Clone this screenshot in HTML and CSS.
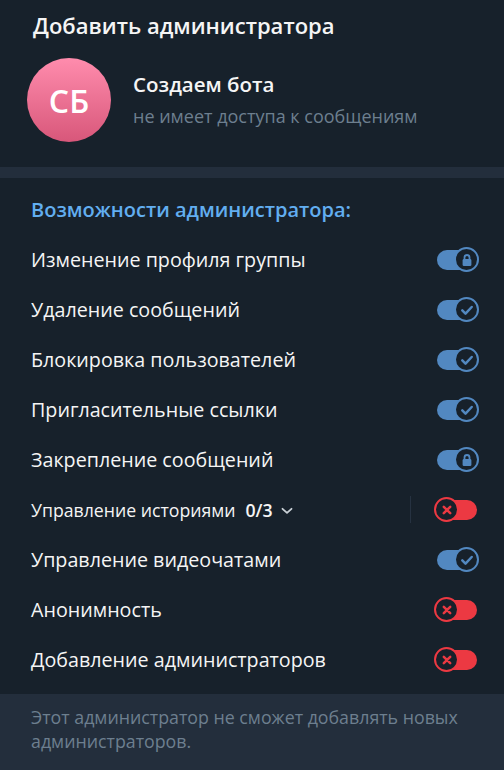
FILE: index.html
```html
<!DOCTYPE html>
<html lang="ru">
<head>
<meta charset="utf-8">
<link rel="stylesheet" href="styles.css">
</head>
<body>
<div class="header">
  <div class="title">Добавить администратора</div>
  <div class="profile">
    <div class="avatar">СБ</div>
    <div class="info">
      <div class="name">Создаем бота</div>
      <div class="status">не имеет доступа к сообщениям</div>
    </div>
  </div>
</div>
<div class="band"></div>
<div class="section">
  <div class="section-title">Возможности администратора:</div>

  <div class="row"><span class="label">Изменение профиля группы</span>
    <span class="toggle on"><span class="track"></span><span class="thumb"><svg viewBox="0 0 20 20"><path class="shackle" d="M7.5 9.6V7.5a2.5 2.5 0 0 1 5 0v2.1"/><rect x="5.6" y="9.1" width="8.8" height="7" rx="1.4"/></svg></span></span></div>

  <div class="row"><span class="label">Удаление сообщений</span>
    <span class="toggle on"><span class="track"></span><span class="thumb"><svg viewBox="0 0 20 20"><path class="stroke" d="M5.3 10.4l3.2 3.2 6.2-6.6"/></svg></span></span></div>

  <div class="row"><span class="label">Блокировка пользователей</span>
    <span class="toggle on"><span class="track"></span><span class="thumb"><svg viewBox="0 0 20 20"><path class="stroke" d="M5.3 10.4l3.2 3.2 6.2-6.6"/></svg></span></span></div>

  <div class="row"><span class="label">Пригласительные ссылки</span>
    <span class="toggle on"><span class="track"></span><span class="thumb"><svg viewBox="0 0 20 20"><path class="stroke" d="M5.3 10.4l3.2 3.2 6.2-6.6"/></svg></span></span></div>

  <div class="row"><span class="label">Закрепление сообщений</span>
    <span class="toggle on"><span class="track"></span><span class="thumb"><svg viewBox="0 0 20 20"><path class="shackle" d="M7.5 9.6V7.5a2.5 2.5 0 0 1 5 0v2.1"/><rect x="5.6" y="9.1" width="8.8" height="7" rx="1.4"/></svg></span></span></div>

  <div class="row"><span class="label small">Управление историями <b class="count">0/3</b><svg class="chev" viewBox="0 0 12 8"><path d="M1.5 1.8l4.5 4 4.5-4"/></svg></span>
    <span class="sep"></span>
    <span class="toggle off"><span class="thumb"><svg viewBox="0 0 20 20"><path class="stroke" d="M6.8 6.8l6.4 6.4M13.2 6.8l-6.4 6.4"/></svg></span><span class="track"></span></span></div>

  <div class="row"><span class="label">Управление видеочатами</span>
    <span class="toggle on"><span class="track"></span><span class="thumb"><svg viewBox="0 0 20 20"><path class="stroke" d="M5.3 10.4l3.2 3.2 6.2-6.6"/></svg></span></span></div>

  <div class="row"><span class="label">Анонимность</span>
    <span class="toggle off"><span class="thumb"><svg viewBox="0 0 20 20"><path class="stroke" d="M6.8 6.8l6.4 6.4M13.2 6.8l-6.4 6.4"/></svg></span><span class="track"></span></span></div>

  <div class="row"><span class="label">Добавление администраторов</span>
    <span class="toggle off"><span class="thumb"><svg viewBox="0 0 20 20"><path class="stroke" d="M6.8 6.8l6.4 6.4M13.2 6.8l-6.4 6.4"/></svg></span><span class="track"></span></span></div>
</div>
<div class="footer">Этот администратор не сможет добавлять новых администраторов.</div>
</body>
</html>
```
FILE: styles.css
```css
* { box-sizing: border-box; }
html, body {
  margin: 0;
  padding: 0;
  background: #17212b;
  height: 100%;
}
body {
  font-family: "Open Sans", "Noto Sans", sans-serif;
  color: #f5f5f5;
  display: flex;
  flex-direction: column;
  overflow: hidden;
}
.header {
  padding: 10px 0 25px 0;
}
.title {
  padding-left: 33px;
  font-size: 22px;
  font-weight: 600;
  line-height: 30px;
}
.profile {
  display: flex;
  align-items: center;
  margin-top: 18px;
  padding-left: 27px;
}
.avatar {
  width: 84px;
  height: 84px;
  border-radius: 50%;
  background: linear-gradient(180deg, #ff8cad 0%, #d8577a 100%);
  display: flex;
  align-items: center;
  justify-content: center;
  font-size: 32px;
  font-weight: 600;
  color: #fff;
  flex-shrink: 0;
}
.info {
  margin-left: 22px;
  display: flex;
  flex-direction: column;
}
.name {
  font-size: 20.5px;
  font-weight: 600;
  line-height: 24px;
}
.status {
  margin-top: 8px;
  font-size: 18px;
  line-height: 24px;
  color: #6d7f8f;
}
.band {
  height: 11px;
  background: #232e3c;
}
.section {
  padding-top: 6px;
  padding-bottom: 10px;
}
.section-title {
  height: 50px;
  display: flex;
  align-items: center;
  padding-left: 31px;
  color: #62aef0;
  font-size: 20px;
  font-weight: 600;
}
.row {
  height: 50px;
  display: flex;
  align-items: center;
  padding: 1px 25px 0 31px;
}
.label {
  flex: 1;
  font-size: 19.7px;
  color: #f5f5f5;
}
.label.small {
  font-size: 17.7px;
  display: flex;
  align-items: center;
}
.count {
  font-weight: 600;
  margin-left: 10px;
}
.chev {
  width: 12px;
  height: 8px;
  margin-left: 8px;
  margin-top: 2px;
}
.chev path {
  fill: none;
  stroke: #c9d0d6;
  stroke-width: 1.8;
  stroke-linecap: round;
  stroke-linejoin: round;
}
.sep {
  width: 1px;
  height: 27px;
  background: #263241;
  margin-right: 23px;
}
.toggle {
  display: flex;
  align-items: center;
}
.track {
  width: 40px;
  height: 20px;
  border-radius: 10px;
}
.thumb {
  width: 25px;
  height: 25px;
  border-radius: 50%;
  border: 2.5px solid;
  background: #17212b;
  position: relative;
  z-index: 1;
  display: flex;
  align-items: center;
  justify-content: center;
}
.thumb svg {
  width: 20px;
  height: 20px;
}
.toggle.on .track { background: #5288c1; }
.toggle.on .thumb { border-color: #5288c1; margin-left: -23px; color: #5288c1; }
.toggle.off { margin-right: 2px; }
.toggle.off .track { background: #ec3942; margin-left: -22px; }
.toggle.off .thumb { border-color: #ec3942; color: #ec3942; }
.stroke {
  fill: none;
  stroke: currentColor;
  stroke-width: 2.5;
  stroke-linecap: round;
  stroke-linejoin: round;
}
.shackle {
  fill: none;
  stroke: currentColor;
  stroke-width: 1.8;
}
.thumb rect { fill: currentColor; }
.footer {
  flex: 1;
  background: #232e3c;
  padding: 11px 30px 0 31px;
  font-size: 17.8px;
  line-height: 24px;
  color: #6d7f8f;
}
```
